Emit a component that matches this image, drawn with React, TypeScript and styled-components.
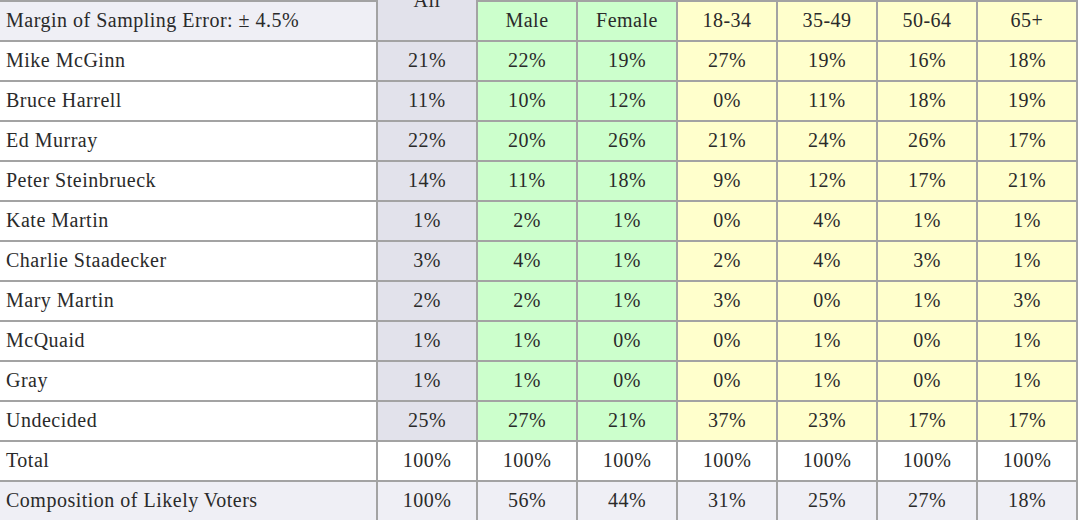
import React from "react";
import styled, { createGlobalStyle } from "styled-components";

const Global = createGlobalStyle`
  html, body { margin: 0; padding: 0; background: #ffffff; overflow: hidden; }
  body { font-family: "Liberation Serif", serif; }
`;

type Tone = "white" | "lavender" | "all" | "green" | "yellow";

const toneColor: Record<Tone, string> = {
  white: "#ffffff",
  lavender: "#efeff5",
  all: "#e2e2eb",
  green: "#ccffcc",
  yellow: "#ffffcc",
};

const Viewport = styled.div`
  width: 1080px;
  height: 520px;
  overflow: hidden;
`;

const Table = styled.table`
  margin: -40px 0 0 -2px;
  border-collapse: separate;
  border-spacing: 0;
  table-layout: fixed;
  width: 1080px;
  border-top: 2px solid #a3a3a3;
  border-left: 2px solid #a3a3a3;
`;

const Cell = styled.td<{ $tone: Tone; $left?: boolean }>`
  box-sizing: border-box;
  height: 40px;
  padding: 0 ${(p) => (p.$left ? "6px" : "0")} 3px;
  border-right: 2px solid #a3a3a3;
  border-bottom: 2px solid #a3a3a3;
  background: ${(p) => toneColor[p.$tone]};
  text-align: ${(p) => (p.$left ? "left" : "center")};
  vertical-align: middle;
  white-space: nowrap;
  font-family: "Liberation Serif", serif;
  font-size: 20px;
  letter-spacing: 0.5px;
  font-weight: normal;
  color: #2a2a2a;
  line-height: 1;
`;

const ages = ["18-34", "35-49", "50-64", "65+"];

const rows: { name: string; v: string[] }[] = [
  { name: "Mike McGinn", v: ["21%", "22%", "19%", "27%", "19%", "16%", "18%"] },
  { name: "Bruce Harrell", v: ["11%", "10%", "12%", "0%", "11%", "18%", "19%"] },
  { name: "Ed Murray", v: ["22%", "20%", "26%", "21%", "24%", "26%", "17%"] },
  { name: "Peter Steinbrueck", v: ["14%", "11%", "18%", "9%", "12%", "17%", "21%"] },
  { name: "Kate Martin", v: ["1%", "2%", "1%", "0%", "4%", "1%", "1%"] },
  { name: "Charlie Staadecker", v: ["3%", "4%", "1%", "2%", "4%", "3%", "1%"] },
  { name: "Mary Martin", v: ["2%", "2%", "1%", "3%", "0%", "1%", "3%"] },
  { name: "McQuaid", v: ["1%", "1%", "0%", "0%", "1%", "0%", "1%"] },
  { name: "Gray", v: ["1%", "1%", "0%", "0%", "1%", "0%", "1%"] },
  { name: "Undecided", v: ["25%", "27%", "21%", "37%", "23%", "17%", "17%"] },
];

const dataTone = (i: number): Tone => (i === 0 ? "all" : i < 3 ? "green" : "yellow");

export default function App() {
  return (
    <>
      <Global />
      <Viewport>
        <Table>
          <colgroup>
            <col style={{ width: 378 }} />
            {Array.from({ length: 7 }).map((_, i) => (
              <col key={i} style={{ width: 100 }} />
            ))}
          </colgroup>
          <thead>
            <tr>
              <Cell as="th" $tone="lavender" $left />
              <Cell as="th" $tone="all" rowSpan={2}>
                All
              </Cell>
              <Cell as="th" $tone="green" colSpan={2} />
              <Cell as="th" $tone="yellow" colSpan={4} />
            </tr>
            <tr>
              <Cell as="th" $tone="lavender" $left>
                Margin of Sampling Error: ± 4.5%
              </Cell>
              <Cell as="th" $tone="green">Male</Cell>
              <Cell as="th" $tone="green">Female</Cell>
              {ages.map((a) => (
                <Cell as="th" key={a} $tone="yellow">
                  {a}
                </Cell>
              ))}
            </tr>
          </thead>
          <tbody>
            {rows.map((r) => (
              <tr key={r.name}>
                <Cell $tone="white" $left>
                  {r.name}
                </Cell>
                {r.v.map((v, i) => (
                  <Cell key={i} $tone={dataTone(i)}>
                    {v}
                  </Cell>
                ))}
              </tr>
            ))}
            <tr>
              <Cell $tone="white" $left>
                Total
              </Cell>
              {Array.from({ length: 7 }).map((_, i) => (
                <Cell key={i} $tone="white">
                  100%
                </Cell>
              ))}
            </tr>
            <tr>
              <Cell $tone="lavender" $left>
                Composition of Likely Voters
              </Cell>
              {["100%", "56%", "44%", "31%", "25%", "27%", "18%"].map((v, i) => (
                <Cell key={i} $tone="lavender">
                  {v}
                </Cell>
              ))}
            </tr>
          </tbody>
        </Table>
      </Viewport>
    </>
  );
}
